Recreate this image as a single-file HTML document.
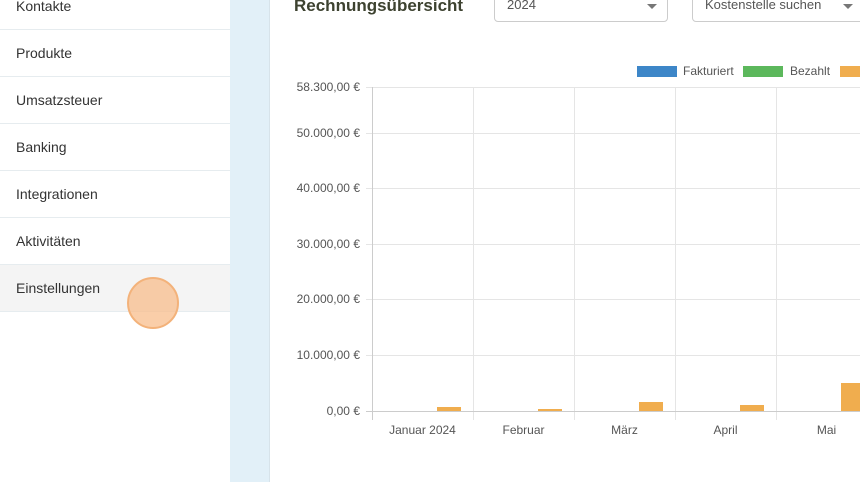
<!DOCTYPE html><html><head><style>
body{margin:0;width:860px;height:482px;overflow:hidden;font-family:"Liberation Sans",sans-serif;background:#fff;position:relative}
.sb{position:absolute;left:0;top:0;width:230px;height:482px;background:#fff}
.it{position:absolute;left:0;width:230px;height:47px;border-bottom:1px solid #e6ecef;font-size:14px;color:#333;padding-left:16px;box-sizing:border-box;line-height:46px}
.strip{position:absolute;left:230px;top:0;width:39px;height:482px;background:#e2f0f8;border-right:1px solid #d7e3ea}
.sel{position:absolute;top:-10px;height:32px;border:1px solid #ccc;border-radius:4px;font-size:13px;color:#555;box-sizing:border-box;padding:6px 12px 0}
.car{position:absolute;right:10px;top:13px;border:5px solid transparent;border-top:5px solid #777}
.yl{position:absolute;right:500px;font-size:12px;color:#555;text-align:right}
.xl{position:absolute;top:423px;font-size:12px;color:#555;width:101px;text-align:center}
</style></head><body>
<div class="sb">
<div class="it" style="top:-17px">Kontakte</div>
<div class="it" style="top:30px">Produkte</div>
<div class="it" style="top:77px">Umsatzsteuer</div>
<div class="it" style="top:124px">Banking</div>
<div class="it" style="top:171px">Integrationen</div>
<div class="it" style="top:218px">Aktivitäten</div>
<div class="it" style="top:265px;background:#f4f4f4">Einstellungen</div>
<div style="position:absolute;left:127px;top:277px;width:52px;height:52px;border-radius:50%;background:rgba(248,190,140,.75);border:2px solid #f3b27a;box-sizing:border-box"></div>
</div>
<div class="strip"></div>
<div style="position:absolute;left:294px;top:-4px;font-size:17px;font-weight:bold;color:#3d4230">Rechnungsübersicht</div>
<div class="sel" style="left:494px;width:174px">2024<span class="car"></span></div>
<div class="sel" style="left:692px;width:180px">Kostenstelle suchen<span class="car" style="right:18px"></span></div>
<div style="position:absolute;left:637px;top:66px;width:40px;height:11px;background:#3d86c8"></div>
<div style="position:absolute;left:683px;top:64px;font-size:12px;color:#555">Fakturiert</div>
<div style="position:absolute;left:743px;top:66px;width:40px;height:11px;background:#5cb85c"></div>
<div style="position:absolute;left:790px;top:64px;font-size:12px;color:#555">Bezahlt</div>
<div style="position:absolute;left:840px;top:66px;width:30px;height:11px;background:#f0ad4e"></div>
<svg style="position:absolute;left:0;top:0" width="860" height="482">
<g stroke="#e5e5e5" stroke-width="1">
<line x1="366" y1="87.5" x2="860" y2="87.5"/><line x1="366" y1="133.5" x2="860" y2="133.5"/><line x1="366" y1="188.5" x2="860" y2="188.5"/><line x1="366" y1="244.5" x2="860" y2="244.5"/><line x1="366" y1="299.5" x2="860" y2="299.5"/><line x1="366" y1="355.5" x2="860" y2="355.5"/>
<line x1="473.5" y1="87" x2="473.5" y2="420"/><line x1="574.5" y1="87" x2="574.5" y2="420"/><line x1="675.5" y1="87" x2="675.5" y2="420"/><line x1="776.5" y1="87" x2="776.5" y2="420"/>
</g>
<line x1="372.5" y1="87" x2="372.5" y2="420" stroke="#ccc"/>
<line x1="366" y1="411.5" x2="860" y2="411.5" stroke="#ccc"/>
<g fill="#f0ad4e"><rect x="437" y="407" width="24" height="4"/><rect x="538" y="409" width="24" height="2"/><rect x="639" y="402" width="24" height="9"/><rect x="740" y="405" width="24" height="6"/><rect x="841" y="383" width="24" height="28"/></g>
</svg>
<div class="yl" style="top:80px">58.300,00 €</div>
<div class="yl" style="top:126px">50.000,00 €</div>
<div class="yl" style="top:181px">40.000,00 €</div>
<div class="yl" style="top:237px">30.000,00 €</div>
<div class="yl" style="top:292px">20.000,00 €</div>
<div class="yl" style="top:348px">10.000,00 €</div>
<div class="yl" style="top:404px">0,00 €</div>
<div class="xl" style="left:372px">Januar 2024</div>
<div class="xl" style="left:473px">Februar</div>
<div class="xl" style="left:574px">März</div>
<div class="xl" style="left:675px">April</div>
<div class="xl" style="left:776px">Mai</div>
</body></html>
